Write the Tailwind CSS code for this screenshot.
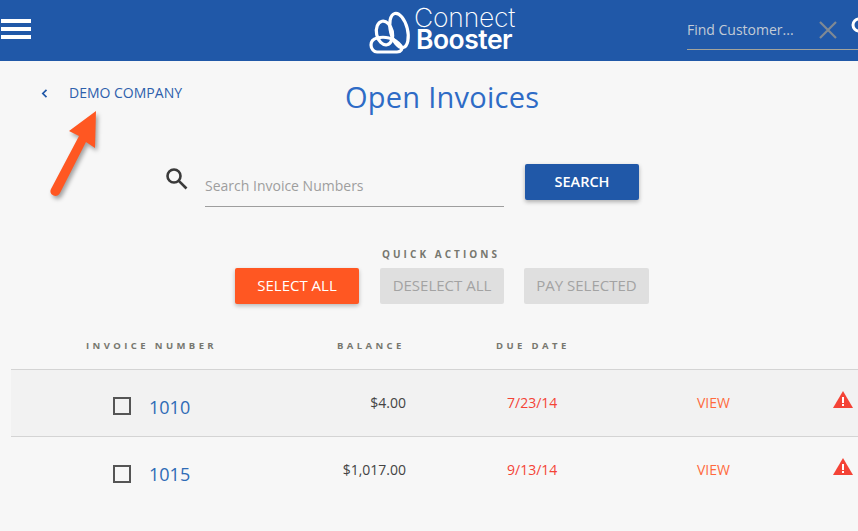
<!DOCTYPE html>
<html lang="en">
<head>
    <meta charset="UTF-8">
    <title>Open Invoices</title>
    <script src="https://cdn.jsdelivr.net/npm/@tailwindcss/browser@4"></script>
</head>
<body class="bg-[#f7f7f7] font-['Open_Sans',sans-serif] w-[858px] h-[531px] overflow-hidden relative">

    <!-- Top bar -->
    <header class="h-[61px] bg-[#2058a8] flex items-center relative overflow-hidden">
        <div class="w-[30px] ml-[1px] shrink-0 flex flex-col gap-[4px] mt-[-3px]">
            <span class="block h-[4px] bg-white"></span>
            <span class="block h-[4px] bg-white"></span>
            <span class="block h-[4px] bg-white"></span>
        </div>
        <div class="ml-[338px] flex items-center w-[150px] shrink-0 gap-[1px]">
            <svg width="44" height="50" viewBox="0 0 44 50" fill="none" stroke="white" stroke-width="3.200" class="shrink-0 mt-[-2px]">
                <path d="M8 47h20c4 0 6-3 4-6-3-4-7-7-12-8-4-1-8-1-12 0-4 1-6 3-6 7 0 4 3 7 6 7z"/>
                <ellipse cx="15.500" cy="28" rx="8" ry="12" transform="rotate(-12 15.500 28)"/>
                <ellipse cx="30" cy="25.500" rx="8.500" ry="17.500" transform="rotate(-14 30 25.500)"/>
            </svg>
            <div class="flex flex-col text-white font-['Inter',sans-serif] mt-[-5px]">
                <span class="text-[26.500px] font-extralight leading-[22px] tracking-[-0.2px]">Connect</span>
                <span class="text-[26.500px] font-semibold leading-[22px] tracking-[-0.5px] ml-[2px]">Booster</span>
            </div>
        </div>
        <div class="ml-[168px] w-[171px] shrink-0 h-[50px] self-start border-b border-[#a3a39b] flex items-center relative">
            <span class="text-[14px] text-[#c3cbd6] mt-[9px]">Find Customer...</span>
            <svg width="18" height="18" viewBox="0 0 18 18" class="absolute left-[132px] top-[21px]" stroke="#7f8a94" stroke-width="2.200" fill="none">
                <path d="M1 1l16 16M17 1L1 17"/>
            </svg>
            <svg width="20" height="20" viewBox="0 0 20 20" class="absolute left-[164px] top-[17px]" stroke="white" stroke-width="3" fill="none">
                <circle cx="8" cy="8" r="6"/>
                <path d="M12.500 12.500L19 19"/>
            </svg>
        </div>
    </header>

    <main>
        <!-- Back link + title -->
        <div class="relative h-[78px]">
            <a class="absolute left-[41px] top-[24px] flex items-center text-[14px] text-[#2e60ac] leading-[16px]">
                <svg width="7" height="9" viewBox="0 0 7 9" fill="none" stroke="#2058a8" stroke-width="1.700"><path d="M5.500 .8L1.800 4.500l3.700 3.700"/></svg>
                <span class="ml-[21px]">DEMO COMPANY</span>
            </a>
            <h1 class="pt-[14px] pl-[345px] text-[29px] leading-[44px] text-[#2e6bc6] tracking-[0.25px]">Open Invoices</h1>
        </div>

        <!-- Search -->
        <div class="flex items-start h-[84px] mt-[25px]">
            <svg width="22" height="22" viewBox="0 0 22 22" class="ml-[166px] mt-[4px]" fill="none" stroke="#3a3a3a" stroke-width="2.600">
                <circle cx="8" cy="8" r="6.500"/>
                <path d="M12.800 12.800L20.500 20.500"/>
            </svg>
            <div class="ml-[17px] w-[299px] h-[43px] border-b border-[#9e9e9e] flex items-center text-[14px] text-[#9e9e9e]">Search Invoice Numbers</div>
            <button class="ml-[21px] w-[114px] h-[36px] bg-[#2058a8] text-white text-[14.500px] font-semibold rounded-[2px] shadow-[0_2px_4px_rgba(0,0,0,0.3)]">SEARCH</button>
        </div>

        <!-- Quick actions -->
        <div class="text-[10px] font-bold tracking-[3.050px] text-[#77776f] pl-[382px] leading-[14px] mt-[-1px]">QUICK ACTIONS</div>
        <div class="flex mt-[7px] pl-[235px]">
            <button class="w-[124px] h-[36px] pb-[1px] bg-[#ff5722] text-white text-[15px] font-medium rounded-[2px] shadow-[0_2px_4px_rgba(0,0,0,0.25)]">SELECT ALL</button>
            <button class="ml-[21px] w-[124px] h-[36px] pb-[1px] bg-[#dfdfdf] text-[#a3a3a3] text-[15px] rounded-[2px]">DESELECT ALL</button>
            <button class="ml-[20px] w-[125px] h-[36px] pb-[1px] bg-[#dfdfdf] text-[#a3a3a3] text-[15px] rounded-[2px]">PAY SELECTED</button>
        </div>

        <!-- Invoice table -->
        <div class="flex text-[9.500px] font-bold tracking-[3.400px] text-[#77776f] leading-[14px] mt-[35px] pl-[86px]">
            <span class="w-[251px]">INVOICE NUMBER</span>
            <span class="w-[159px]">BALANCE</span>
            <span>DUE DATE</span>
        </div>
        <div class="ml-[11px] mt-[16px]">
            <div class="h-[68px] bg-[#f2f2f2] border-y border-[#d4d4d4] flex items-center">
                <span class="ml-[102px] w-[18px] h-[18px] border-2 border-[#555] shrink-0 mt-[6px]"></span>
                <a class="ml-[18px] w-[80px] text-[18px] text-[#2e6bb6] mt-[8px]">1010</a>
                <span class="w-[177px] text-right text-[14px] text-[#444] mt-[-2px]">$4.00</span>
                <span class="ml-[101px] w-[190px] text-[14px] text-[#f44336] mt-[-2px]">7/23/14</span>
                <a class="w-[136px] text-[14px] text-[#ff6a3d] mt-[-2px]">VIEW</a>
                <svg width="20" height="18" viewBox="0 0 20 18" class="mt-[-6px] shrink-0"><path d="M10 0L0 17h20z" fill="#f44336"/><rect x="9" y="6" width="2" height="6" fill="white"/><rect x="9" y="13" width="2" height="2" fill="white"/></svg>
            </div>
            <div class="h-[66px] flex items-center">
                <span class="ml-[102px] w-[18px] h-[18px] border-2 border-[#555] shrink-0 mt-[8px]"></span>
                <a class="ml-[18px] w-[80px] text-[18px] text-[#2e6bb6] mt-[8px]">1015</a>
                <span class="w-[177px] text-right text-[14px] text-[#444] mt-[-2px]">$1,017.00</span>
                <span class="ml-[101px] w-[190px] text-[14px] text-[#f44336] mt-[-2px]">9/13/14</span>
                <a class="w-[136px] text-[14px] text-[#ff6a3d] mt-[-2px]">VIEW</a>
                <svg width="20" height="18" viewBox="0 0 20 18" class="mt-[-6px] shrink-0"><path d="M10 0L0 17h20z" fill="#f44336"/><rect x="9" y="6" width="2" height="6" fill="white"/><rect x="9" y="13" width="2" height="2" fill="white"/></svg>
            </div>
        </div>
    </main>

    <!-- Annotation arrow on top of the page -->
    <svg width="70" height="100" viewBox="0 0 70 100" class="absolute left-[40px] top-[105px] drop-shadow-[2px_3px_2px_rgba(0,0,0,0.35)]">
        <path d="M56 6L29 26l10 5-28 53c-3 6 6 10 9 4l26-51 9 6z" fill="#ff5722"/>
    </svg>
</body>
</html>
